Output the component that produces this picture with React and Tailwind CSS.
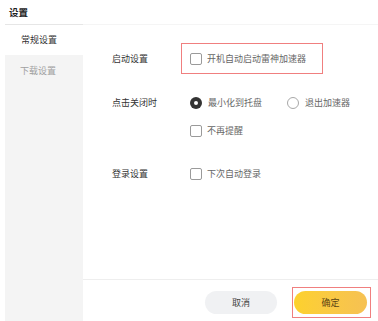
import React, { useState } from "react";

const CheckBox = ({ checked, onChange, label }) => {
	return (
		<div
			className="flex items-center gap-[5px] h-[12px] cursor-pointer"
			onClick={onChange}
		>
			<div className="w-[12px] h-[12px] rounded-[2px] border border-[#9a9a9a] bg-white box-border"></div>
			<span className="text-[9px] leading-[12px] text-[#666666]">{label}</span>
		</div>
	);
};

const Radio = ({ checked, onChange, label }) => {
	return (
		<div
			className="flex items-center gap-[6px] h-[12px] cursor-pointer"
			onClick={onChange}
		>
			{checked ? (
				<div className="w-[12px] h-[12px] rounded-full bg-[#333333] flex items-center justify-center">
					<div className="w-[4px] h-[4px] rounded-full bg-white"></div>
				</div>
			) : (
				<div className="w-[12px] h-[12px] rounded-full border border-[#a8a8a8] bg-white box-border"></div>
			)}
			<span className="text-[9px] leading-[12px] text-[#666666]">{label}</span>
		</div>
	);
};

const App = () => {
	const [closeMode, setCloseMode] = useState("tray");

	return (
		<div className="w-[378px] h-[321px] bg-white flex flex-col font-['Noto_Sans_CJK_SC',sans-serif] overflow-hidden">
			{/* header */}
			<div className="h-[24px] flex items-center pl-[9px]">
				<span className="text-[9.5px] font-bold text-[#222222]">设置</span>
			</div>

			<div className="flex flex-1">
				{/* sidebar */}
				<div className="ml-[5px] w-[78px] bg-[#f4f4f4] flex flex-col border-t border-[#e6e6e6]">
					<div className="h-[30px] bg-white flex items-center pl-[16px]">
						<span className="text-[9px] text-[#333333]">常规设置</span>
					</div>
					<div className="h-[32px] flex items-center pl-[15px]">
						<span className="text-[9px] text-[#a0a0a0]">下载设置</span>
					</div>
				</div>

				{/* content */}
				<div className="flex-1 flex flex-col border-t border-[#f5f5f5]">
					<div className="flex-1 flex flex-col pl-[29px]">
						<div className="flex items-center mt-[18px]">
							<span className="w-[69px] text-[9px] text-[#333333]">启动设置</span>
							<div className="w-[142px] h-[31px] border border-[#f07f7f] flex items-center px-[8px]">
								<CheckBox label="开机自动启动雷神加速器" />
							</div>
						</div>

						<div className="flex items-center mt-[23px] h-[12px]">
							<span className="w-[78px] text-[9px] text-[#333333]">点击关闭时</span>
							<div className="flex items-center gap-[25px]">
								<Radio
									label="最小化到托盘"
									checked={closeMode === "tray"}
									onChange={() => setCloseMode("tray")}
								/>
								<Radio
									label="退出加速器"
									checked={closeMode === "exit"}
									onChange={() => setCloseMode("exit")}
								/>
							</div>
						</div>

						<div className="flex items-center mt-[16px] pl-[78px]">
							<CheckBox label="不再提醒" />
						</div>

						<div className="flex items-center mt-[31px] h-[12px]">
							<span className="w-[78px] text-[9px] text-[#333333]">登录设置</span>
							<CheckBox label="下次自动登录" />
						</div>
					</div>

					{/* footer */}
					<div className="h-[42px] border-t border-[#eeeeee] flex items-start justify-end pr-[7px] pt-[7px]">
						<button className="mt-[4px] w-[72px] h-[23px] rounded-full bg-[#f0f1f3] text-[9px] text-[#444444] flex items-center justify-center">
							取消
						</button>
						<div className="ml-[15px] border border-[#f07f7f] pl-[1px] pr-[3px] py-[3px]">
							<button className="w-[73px] h-[23px] rounded-full bg-gradient-to-r from-[#fdd12c] to-[#f6c153] text-[9px] text-[#5a4413] flex items-center justify-center">
								确定
							</button>
						</div>
					</div>
				</div>
			</div>
		</div>
	);
};

export default App;
